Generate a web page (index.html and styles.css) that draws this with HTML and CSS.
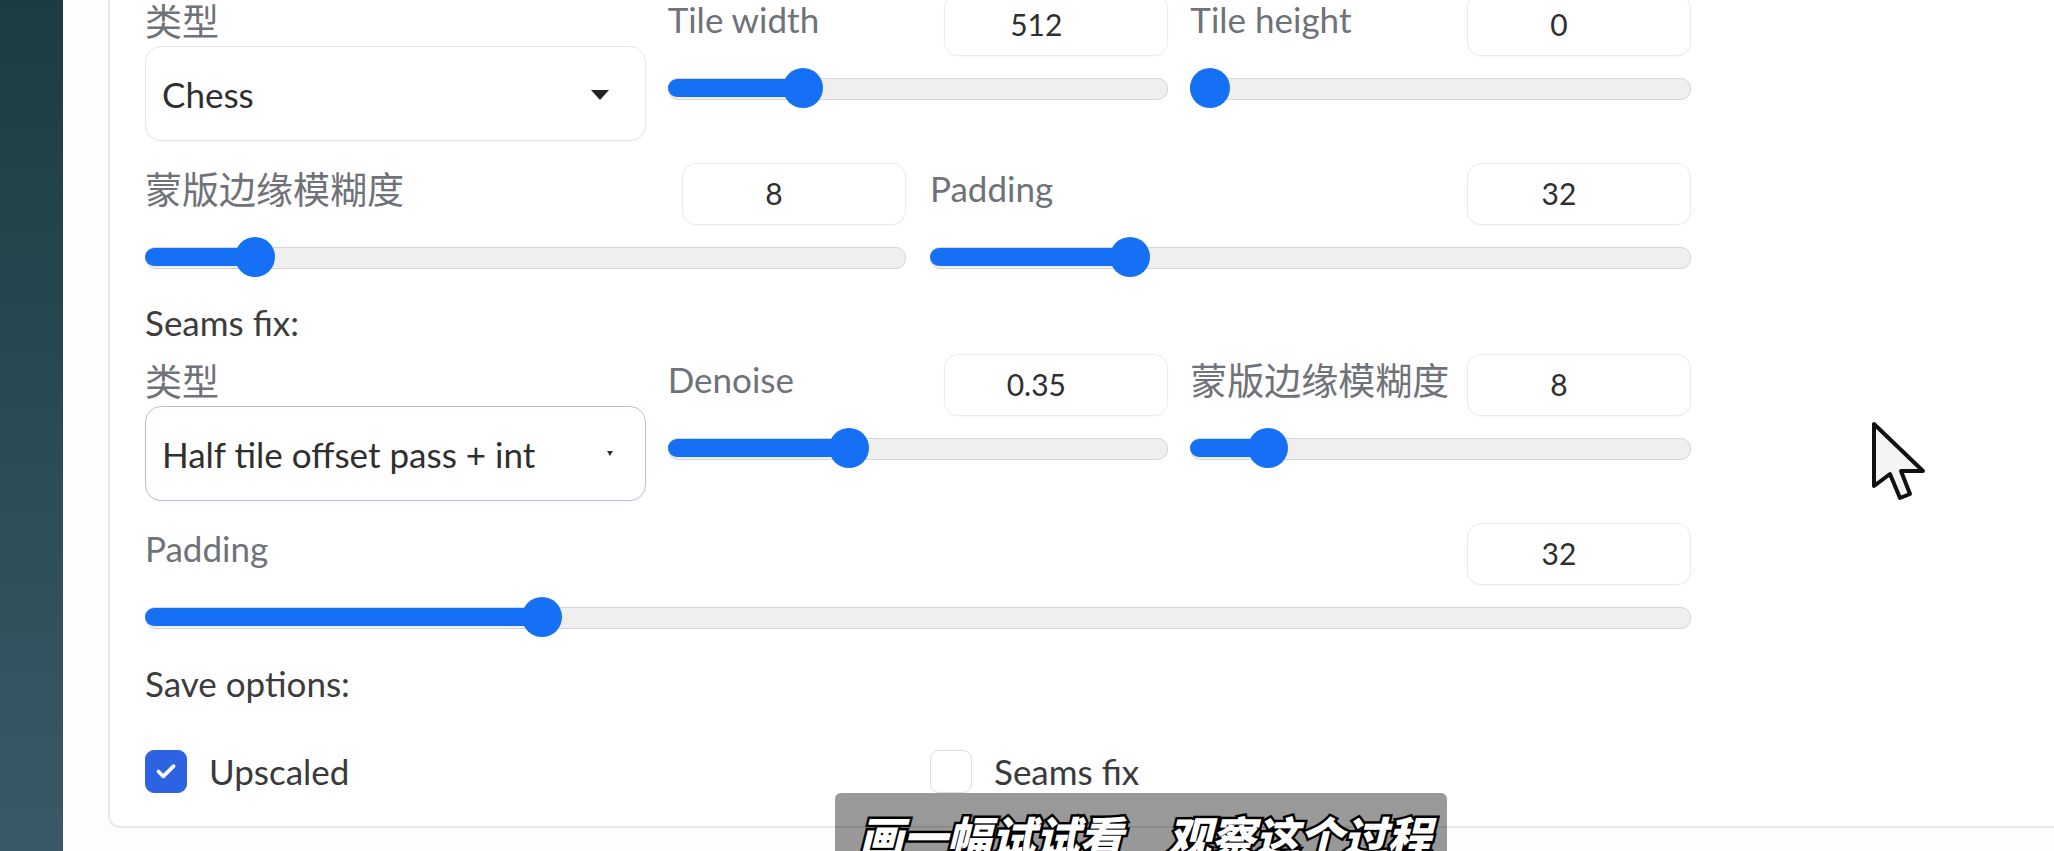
FILE: index.html
```html
<!DOCTYPE html>
<html lang="zh">
<head>
<meta charset="utf-8">
<title>Tiled Diffusion settings</title>
<link rel="stylesheet" href="styles.css">
</head>
<body>
<div class="page">
  <aside class="strip"></aside>
  <main class="main">
    <section class="panel">
      <div class="grid3 row-a">
        <div class="field">
          <div class="lbl cjk">类型</div>
          <div class="select">
            <span class="sel-text">Chess</span>
            <span class="caret-big"></span>
          </div>
        </div>
        <div class="slider" style="--v:0.25">
          <div class="sl-head"><span class="lbl">Tile width</span><span class="num">512</span></div>
          <div class="track"><div class="fill"></div><div class="thumb"></div></div>
        </div>
        <div class="slider" style="--v:0">
          <div class="sl-head"><span class="lbl">Tile height</span><span class="num">0</span></div>
          <div class="track"><div class="fill"></div><div class="thumb"></div></div>
        </div>
      </div>

      <div class="grid2 row-b">
        <div class="slider" style="--v:0.125">
          <div class="sl-head"><span class="lbl cjk">蒙版边缘模糊度</span><span class="num">8</span></div>
          <div class="track"><div class="fill"></div><div class="thumb"></div></div>
        </div>
        <div class="slider" style="--v:0.25">
          <div class="sl-head"><span class="lbl">Padding</span><span class="num">32</span></div>
          <div class="track"><div class="fill"></div><div class="thumb"></div></div>
        </div>
      </div>

      <div class="section-title seams">Seams fix:</div>

      <div class="grid3 row-d">
        <div class="field">
          <div class="lbl cjk">类型</div>
          <div class="select focused">
            <span class="sel-text">Half tile offset pass + int</span>
            <span class="caret-small"></span>
          </div>
        </div>
        <div class="slider" style="--v:0.35">
          <div class="sl-head"><span class="lbl">Denoise</span><span class="num">0.35</span></div>
          <div class="track"><div class="fill"></div><div class="thumb"></div></div>
        </div>
        <div class="slider" style="--v:0.125">
          <div class="sl-head"><span class="lbl cjk">蒙版边缘模糊度</span><span class="num">8</span></div>
          <div class="track"><div class="fill"></div><div class="thumb"></div></div>
        </div>
      </div>

      <div class="row-e">
        <div class="slider" style="--v:0.25">
          <div class="sl-head"><span class="lbl">Padding</span><span class="num">32</span></div>
          <div class="track"><div class="fill"></div><div class="thumb"></div></div>
        </div>
      </div>

      <div class="section-title save">Save options:</div>

      <div class="grid2 checks">
        <label class="check">
          <span class="box checked">
            <svg viewBox="0 0 24 24" width="26" height="26"><path d="M5 12.5l4.5 4.5L19 7.5" fill="none" stroke="#fff" stroke-width="3.4" stroke-linecap="round" stroke-linejoin="round"/></svg>
          </span>
          <span class="check-text">Upscaled</span>
        </label>
        <label class="check">
          <span class="box"></span>
          <span class="check-text">Seams fix</span>
        </label>
      </div>
    </section>
  </main>
</div>

<div class="subtitle">画一幅试试看　观察这个过程</div>

<svg class="cursor" viewBox="0 0 56 82" width="56" height="82">
  <path d="M3 3 L3 65 L19 53 L29 77 L39 73 L30 50 L52 50 Z" fill="#f4f4f4" stroke="#111" stroke-width="4" stroke-linejoin="round"/>
</svg>
</body>
</html>
```

FILE: styles.css
```css
* { box-sizing: border-box; }

html, body {
  margin: 0;
  padding: 0;
  background: #ffffff;
  overflow: hidden;
  height: 851px;
}

body {
  font-family: "Lato", "Noto Sans CJK SC", sans-serif;
  color: #3a3a3a;
  position: relative;
}

.page {
  display: flex;
  height: 851px;
}

.strip {
  width: 63px;
  flex: none;
  background: linear-gradient(180deg, #1c3c42 0%, #274a52 45%, #3a5968 100%);
}

.main {
  flex: 1;
  padding-left: 45px;
  background: #fdfdfd;
}

.panel {
  margin-top: -30px;
  padding: 24px 0 33px 35px;
  border-left: 2px solid #e8e8e8;
  border-bottom: 2px solid #e8e8e8;
  border-bottom-left-radius: 12px;
  background: #ffffff;
  display: flex;
  flex-direction: column;
}

.grid3 {
  display: grid;
  grid-template-columns: repeat(3, 1fr);
  column-gap: 22px;
  width: 1546px;
}

.grid2 {
  display: grid;
  grid-template-columns: repeat(2, 1fr);
  column-gap: 24px;
  width: 1546px;
}

.row-e { width: 1546px; }

.row-b { margin-top: 22px; }
.row-d { margin-top: 10px; }
.row-e { margin-top: 22px; }

.lbl {
  font-size: 35px;
  line-height: 44px;
  color: #6f7279;
  white-space: nowrap;
}

.lbl.cjk {
  font-family: "Noto Sans CJK SC", sans-serif;
  font-size: 37px;
}

.field .lbl { margin-top: 4px; }

.select {
  margin-top: 4px;
  height: 95px;
  border: 1.5px solid #e7e7e7;
  border-radius: 16px;
  background: #fff;
  box-shadow: 0 1px 2px rgba(0,0,0,0.04);
  display: flex;
  align-items: center;
  padding: 0 36px 0 16px;
}

.select.focused {
  border-color: #b9c0dc;
}

.sel-text {
  flex: 1;
  font-size: 35px;
  color: #2f2f2f;
  white-space: nowrap;
  overflow: hidden;
}

.caret-big {
  width: 0;
  height: 0;
  border-left: 9.5px solid transparent;
  border-right: 9.5px solid transparent;
  border-top: 10px solid #222;
  margin-top: 2px;
}

.caret-small {
  width: 0;
  height: 0;
  border-left: 3px solid transparent;
  border-right: 3px solid transparent;
  border-top: 5px solid #333;
  margin-right: -4px;
}

.slider { display: flex; flex-direction: column; }

.sl-head {
  display: flex;
  justify-content: space-between;
  align-items: flex-start;
  height: 62px;
}

.sl-head .lbl { padding-top: 3px; }

.num {
  width: 224px;
  height: 62px;
  flex: none;
  border: 1.5px solid #ebebeb;
  border-radius: 14px;
  background: #fff;
  box-shadow: 0 1px 2px rgba(0,0,0,0.03);
  font-size: 30px;
  line-height: 59px;
  text-align: center;
  padding-right: 40px;
  color: #2f2f2f;
}

.track {
  position: relative;
  margin-top: 12px;
  height: 40px;
}

.track::before {
  content: "";
  position: absolute;
  left: 0;
  right: 0;
  top: 10px;
  height: 20px;
  border-radius: 10px;
  background: #efefef;
  border: 1.5px solid #d6d6d6;
}

.fill {
  position: absolute;
  left: 0;
  top: 11px;
  height: 18px;
  border-radius: 9px;
  background: #1670f5;
  width: calc(var(--v) * (100% - 40px) + 20px);
}

.thumb {
  position: absolute;
  top: 0;
  width: 40px;
  height: 40px;
  border-radius: 50%;
  background: #1670f5;
  left: calc(var(--v) * (100% - 40px));
}

.section-title {
  font-size: 35px;
  line-height: 44px;
  color: #3c3c3c;
}

.seams { margin-top: 23px; }
.save { margin-top: 24px; }

.checks { margin-top: 44px; }

.check {
  display: flex;
  align-items: center;
  gap: 22px;
  height: 44px;
}

.box {
  width: 42px;
  height: 43px;
  border-radius: 9px;
  border: 1.5px solid #dedede;
  background: #fff;
  display: flex;
  align-items: center;
  justify-content: center;
  flex: none;
}

.box.checked {
  background: #2d63e2;
  border-color: #2d63e2;
}

.check-text {
  font-size: 35px;
  color: #3a3a3a;
}

.subtitle {
  position: absolute;
  left: 835px;
  top: 793px;
  width: 612px;
  height: 80px;
  background: rgba(0, 0, 0, 0.4);
  border-radius: 6px;
  padding-left: 24px;
  font-family: "Noto Sans CJK SC", sans-serif;
  font-weight: 900;
  font-style: italic;
  font-size: 44px;
  line-height: 60px;
  padding-top: 12px;
  color: #ffffff;
  -webkit-text-stroke: 5px #000;
  paint-order: stroke fill;
  white-space: nowrap;
}

.cursor {
  position: absolute;
  left: 1871px;
  top: 421px;
}
```
